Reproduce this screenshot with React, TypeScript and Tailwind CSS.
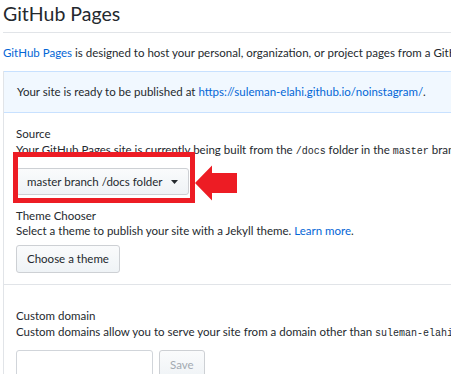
const MONO = "font-['Liberation_Mono',monospace] text-[10px]";

function Caret() {
  return (
    <svg width="7" height="4" viewBox="0 0 7 4" className="ml-[8px] mt-[1px]">
      <path d="M0 0h7L3.5 4z" fill="#24292e" />
    </svg>
  );
}

function Button({ children, disabled, h }: { children: React.ReactNode; disabled?: boolean; h: string }) {
  return (
    <button
      className={
        h +
        ' px-[10px] flex items-center rounded-[3px] border border-[#cdd0d4] bg-gradient-to-b from-[#fafbfc] to-[#eff3f6] text-[11.5px] ' +
        (disabled ? 'text-[#a3aab1]' : 'text-[#24292e]')
      }
    >
      {children}
    </button>
  );
}

// red screenshot markup drawn over the settings page
function Annotation() {
  return (
    <>
      <div className="absolute left-[13px] top-[152px] w-[182px] h-[51px] border-[5px] border-[#ed1c24]" />
      <svg className="absolute left-[194px] top-[164px]" width="44" height="38" viewBox="0 0 44 38">
        <path d="M1 19L18 1.5V9h25v20H18v7.5z" fill="#ed1c24" />
      </svg>
    </>
  );
}

export default function App() {
  return (
    <div className="relative w-[451px] h-[374px] overflow-hidden bg-white text-[#24292e] font-['Lato',sans-serif] text-[11.5px]">
      <div className="w-[760px] pl-[3px]">
        <h2 className="text-[19.5px] leading-[27px] pb-[5px] border-b border-[#e1e4e8]">GitHub Pages</h2>

        <p className="mt-[12px] leading-[16px] whitespace-nowrap">
          <span className="text-[#0366d6]">GitHub Pages</span> is designed to host your personal, organization, or
          project pages from a GitHub repository.
        </p>

        <div className="mt-[10px] border border-[#e1e4e8] border-t-0">
          <div className="h-[42px] flex items-center px-[13px] bg-[#f1f8ff] border-y border-[#c8e1ff] whitespace-nowrap">
            Your site is ready to be published at&nbsp;
            <span className="text-[#0366d6]">https://suleman-elahi.github.io/noinstagram/</span>.
          </div>

          <div className="px-[12px] pt-[13px] pb-[11px] border-b border-[#e1e4e8]">
            <div className="leading-[16px]">Source</div>
            <div className="leading-[16px] whitespace-nowrap">
              Your GitHub Pages site is currently being built from the <span className={MONO}>/docs</span> folder in
              the <span className={MONO}>master</span> branch. Learn more.
            </div>
            <div className="mt-[8px]">
              <Button h="h-[27px]">
                master branch /docs folder
                <Caret />
              </Button>
            </div>

            <div className="mt-[13px] leading-[15px]">Theme Chooser</div>
            <div className="leading-[16px]">
              Select a theme to publish your site with a Jekyll theme.{' '}
              <span className="text-[#0366d6]">Learn more</span>.
            </div>
            <div className="mt-[6px]">
              <Button h="h-[28px]">Choose a theme</Button>
            </div>
          </div>

          <div className="px-[12px] pt-[23px]">
            <div className="leading-[16px]">Custom domain</div>
            <div className="leading-[16px] whitespace-nowrap">
              Custom domains allow you to serve your site from a domain other than{' '}
              <span className={MONO}>suleman-elahi.github.io</span>. Learn more.
            </div>
            <div className="mt-[8px] flex gap-[6px]">
              <div className="w-[137px] h-[30px] border border-[#d1d5da] rounded-[3px] bg-white" />
              <Button disabled h="h-[30px]">
                Save
              </Button>
            </div>
          </div>
        </div>
      </div>
      <Annotation />
    </div>
  );
}
